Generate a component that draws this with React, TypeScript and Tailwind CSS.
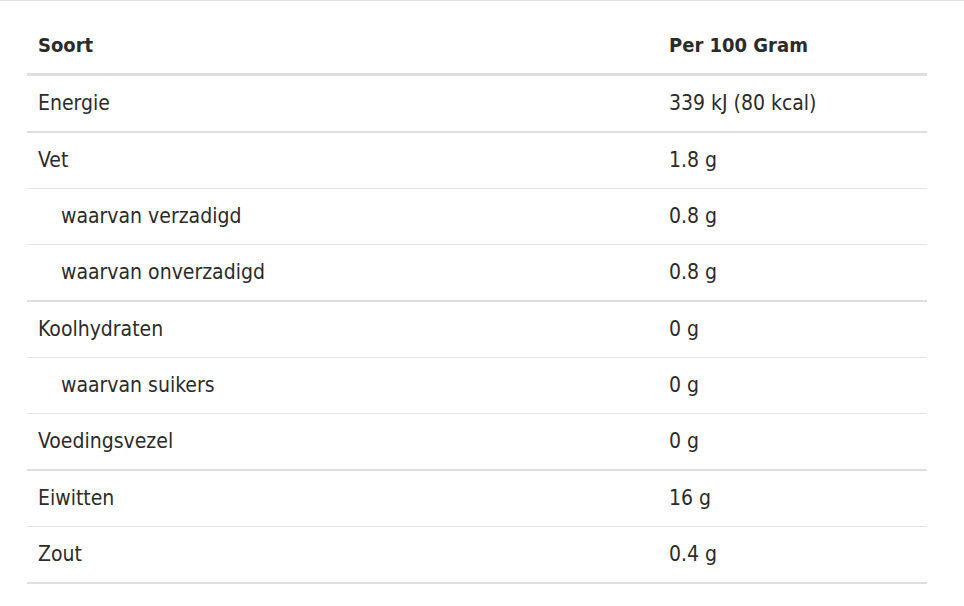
const rows: { label: string; value: string; sub?: boolean; thick?: boolean; h: string }[] = [
  { label: "Energie", value: "339 kJ (80 kcal)", thick: true, h: "h-[57px]" },
  { label: "Vet", value: "1.8 g", h: "h-[56px]" },
  { label: "waarvan verzadigd", value: "0.8 g", sub: true, h: "h-[56px]" },
  { label: "waarvan onverzadigd", value: "0.8 g", sub: true, thick: true, h: "h-[57px]" },
  { label: "Koolhydraten", value: "0 g", h: "h-[56px]" },
  { label: "waarvan suikers", value: "0 g", sub: true, h: "h-[56px]" },
  { label: "Voedingsvezel", value: "0 g", thick: true, h: "h-[57px]" },
  { label: "Eiwitten", value: "16 g", h: "h-[56px]" },
  { label: "Zout", value: "0.4 g", thick: true, h: "h-[57px]" },
];

export default function App() {
  return (
    <div
      className="min-h-[606px] w-full bg-white text-[#2b2b2b]"
      style={{ fontFamily: '"Liberation Sans Narrow", "DejaVu Sans Condensed", "Roboto Condensed", "Liberation Sans", sans-serif' }}
    >
      <div className="h-px w-full bg-[#e2e2e2]" />
      <div className="mx-[27px] w-[900px] text-[21px]">
        <div className="flex h-[75px] items-end border-b-[3px] border-[#dedede] pb-[13px] text-[20px] font-bold">
          <div className="w-[642px] pl-[11px]">Soort</div>
          <div>Per 100 Gram</div>
        </div>
        {rows.map((r) => (
          <div
            key={r.label}
            className={`flex items-center pt-[1px] ${r.h} ${r.thick ? "border-b-2 border-[#dedede]" : "border-b border-[#e4e4e4]"}`}
          >
            <div className={`w-[642px] ${r.sub ? "pl-[34px]" : "pl-[11px]"}`}>{r.label}</div>
            <div>{r.value}</div>
          </div>
        ))}
      </div>
    </div>
  );
}
